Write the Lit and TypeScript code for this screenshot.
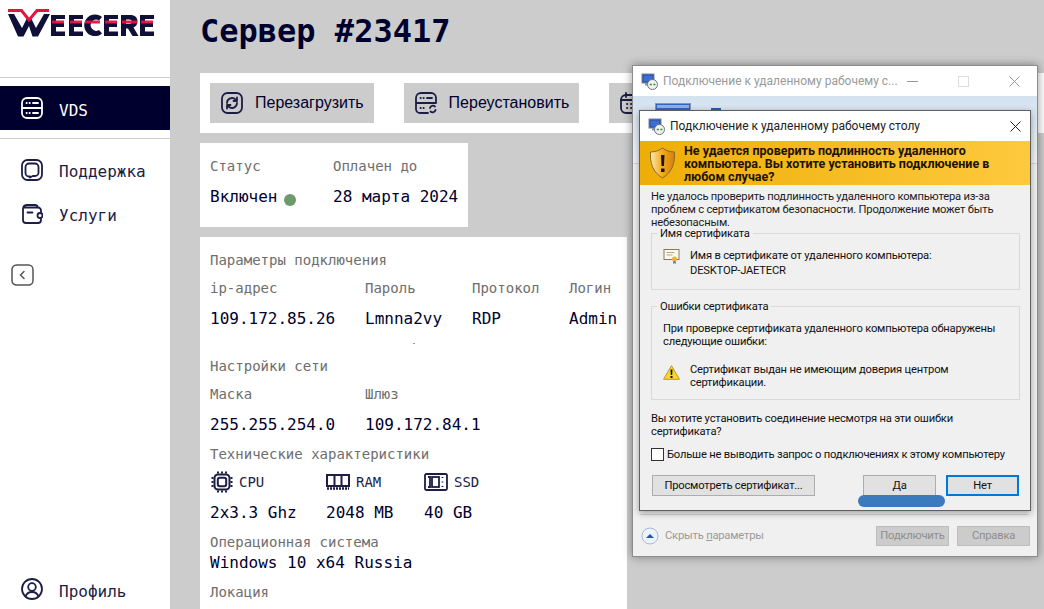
import { LitElement, html, css, svg } from "lit";
import { customElement } from "lit/decorators.js";

const rdpIcon = svg`<rect x="1" y="1" width="12" height="9" fill="#2b4a9c" stroke="#7d8794"/><rect x="2.5" y="2.5" width="9" height="6" fill="#3a6fd8"/><rect x="4" y="10" width="7" height="2.5" fill="#8d97a5"/><circle cx="11.5" cy="11.5" r="5" fill="#f2f2f2" stroke="#6e7378"/><path d="M8.8 11.5h2M12.400 11.5h2" stroke="#2f8f35" stroke-width="1.4"/>`;

@customElement("app-root")
export class AppRoot extends LitElement {
  static styles = css`
    :host { display: block; width: 1044px; height: 609px; overflow: hidden; position: relative; background: #cccccc; font-family: "DejaVu Sans Mono", "Liberation Mono", monospace; color: #00002e; }
    .page { display: flex; height: 609px; }
    .side { width: 170px; flex: none; background: #fff; display: flex; flex-direction: column; }
    .logo { height: 78px; flex: none; padding: 8px 0 0 8px; box-sizing: border-box; border-bottom: 1px solid #ccc; }
    .logo svg { display: block; }
    .nav { display: flex; align-items: center; gap: 16px; padding-left: 21px; height: 44px; flex: none; font-size: 16px; color: #1d1d45; }
    .nav span { padding-top: 4px; }
    .nav svg { flex: none; }
    .nav.on { margin-top: 8px; background: #00002e; color: #fff; }
    .rule { height: 1px; background: #ccc; margin: 8px 0 0; flex: none; }
    .mid { display: flex; flex-direction: column; margin-top: 9px; flex: none; }
    .mid .nav span { padding-top: 2px; }
    .collapse { margin: 28px 0 0 11px; display: block; flex: none; }
    .spacer { flex: 1; }
    .prof { margin-bottom: -2px; }
    .main { flex: 1; min-width: 0; padding: 0 0 0 30px; display: flex; flex-direction: column; }
    .main > * { flex: none; }
    h1 { margin: 0; height: 73px; padding-top: 13px; box-sizing: border-box; font-size: 32px; line-height: 36px; font-weight: 700; color: #00002e; white-space: nowrap; }
    .bar { display: flex; gap: 30px; background: #fff; padding: 10px; height: 60px; box-sizing: border-box; width: 844px; overflow: hidden; }
    .btn { display: flex; align-items: center; gap: 12px; flex: none; height: 40px; padding: 0 10px 0 11px; background: #ccc; font: 16px "Liberation Sans", Arial, sans-serif; color: #00002e; }
    .card { background: #fff; margin-top: 10px; padding: 10px; box-sizing: border-box; }
    .status { width: 268px; height: 84px; padding-top: 9px; display: grid; grid-template-columns: 123px auto; grid-template-rows: 28px 34px; }
    .lab { font-size: 14px; line-height: 28px; color: #6e6e6e; white-space: nowrap; }
    .val { font-size: 16px; line-height: 34px; white-space: nowrap; color: #00002e; }
    .val.status-val { display: flex; align-items: center; gap: 7px; }
    .dot { width: 12px; height: 12px; border-radius: 50%; background: #6c9a6b; margin-top: 5px; }
    .info { width: 427px; height: 380px; padding: 13px 10px 0; overflow: hidden; }
    .sec { font-size: 14px; line-height: 20px; color: #6e6e6e; white-space: nowrap; }
    .grid { display: grid; }
    .conn { grid-template-columns: 155px 107px 97px auto; margin-top: 8px; }
    .conn .lab, .net .lab { line-height: 20px; }
    .conn .val, .net .val { line-height: 20px; margin-top: 11px; }
    .dotmark { height: 27px; box-sizing: border-box; padding: 14px 0 0 203px; }
    .dotmark i { display: block; width: 2px; height: 1px; background: #999; }
    .net { grid-template-columns: 155px auto; margin-top: 8px; }
    .tech-title { margin-top: 9px; }
    .tech { grid-template-columns: 116px 98px auto; margin-top: 6px; }
    .hw { display: flex; align-items: center; gap: 6px; font-size: 14px; height: 24px; color: #1d1d45; white-space: nowrap; }
    .hw .cpu { margin-left: 1px; }
    .tech .val { line-height: 20px; margin-top: 9px; }
    .os { margin-top: 9px; }
    .osv { font-size: 16px; line-height: 20px; padding-top: 1px; white-space: nowrap; }
    .loc { margin-top: 9px; }
    .win { position: absolute; box-sizing: border-box; font-family: Roboto, "Liberation Sans", Arial, sans-serif; font-size: 11.2px; letter-spacing: -0.2px; color: #111; }
    .back { left: 632px; top: 65px; width: 406px; height: 492px; background: #f0f0f0; border: 1px solid #8c8c8c; box-shadow: 0 0 9px rgba(0,0,0,.4); display: flex; flex-direction: column; }
    .tbar { height: 30px; flex: none; display: flex; align-items: center; padding-left: 8px; gap: 5px; font-size: 12px; letter-spacing: 0; color: #9a9a9a; white-space: nowrap; background: #fff; }
    .tbar .name { flex: 1; min-width: 0; }
    .ctl { width: 46px; height: 28px; display: flex; align-items: center; justify-content: center; flex: none; }
    .bhead { height: 68px; background: linear-gradient(#d4e2f0, #eef3f8); flex: none; position: relative; border-bottom: 1px solid #d5d5d5; box-sizing: border-box; }
    .mon { position: absolute; top: 7px; left: 22px; }
    .mon2 { position: absolute; top: 12px; left: 78px; width: 10px; height: 4px; background: #2b5fa8; }
    .bbody { flex: 1; margin: 0 9px 0 7px; border-bottom: 1px solid #d5d5d5; }
    .bfoot { height: 41px; flex: none; display: flex; align-items: center; padding: 0 7px 0 8px; gap: 6px; color: #9a9a9a; }
    .bfoot .sp { flex: 1; }
    .bfoot .b2 { width: 73px; height: 20px; background: #ccc; border: 1px solid #bdbdbd; display: flex; align-items: center; justify-content: center; color: #8e8e8e; box-sizing: border-box; }
    .bfoot .b2 + .b2 { margin-left: 2px; }
    .ul { text-decoration: underline; }
    .front { left: 639px; top: 110px; width: 392px; height: 401px; background: #f0f0f0; border: 1px solid #5f5f5f; box-shadow: 0 2px 7px rgba(0,0,0,.35); display: flex; flex-direction: column; }
    .front > * { flex: none; }
    .ftitle { height: 30px; background: #fff; display: flex; align-items: center; padding-left: 8px; gap: 5px; font-size: 12px; letter-spacing: 0; color: #222; white-space: nowrap; }
    .ftitle .name { flex: 1; }
    .ftitle .x { width: 30px; display: flex; justify-content: center; }
    .warn { height: 44px; background: linear-gradient(90deg, #eeae07, #fdc93e); display: flex; gap: 8px; padding: 0 0 0 9px; align-items: center; }
    .warn b { font-size: 12.5px; letter-spacing: 0; line-height: 13px; font-weight: 700; color: #1b1300; width: 330px; }
    .txt { line-height: 13px; color: #1c1c1c; padding: 5px 0 0 11px; width: 360px; box-sizing: content-box; }
    .fs { margin: 4px 10px 0 11px; border: 1px solid #d9d9d9; position: relative; box-sizing: border-box; }
    .legend { position: absolute; top: -7px; left: 5px; background: #f0f0f0; padding: 0 3px; line-height: 14px; white-space: nowrap; }
    .c1 { height: 57px; display: flex; gap: 10px; padding: 14px 0 0 11px; line-height: 15px; white-space: nowrap; }
    .c1 svg { flex: none; }
    .c2 { height: 94px; padding: 15px 0 0 11px; line-height: 13px; margin-top: 16px; white-space: nowrap; }
    .c2row { display: flex; gap: 10px; margin-top: 15px; }
    .c2row svg { margin-top: 2px; flex: none; }
    .q { padding: 12px 0 0 11px; line-height: 13px; width: 350px; }
    .chk { display: flex; align-items: center; gap: 3px; padding: 10px 0 0 11px; white-space: nowrap; }
    .box { width: 13px; height: 13px; flex: none; border: 1px solid #333; background: #fff; box-sizing: border-box; }
    .dbtns { display: flex; padding: 14px 0 0 12px; position: relative; }
    .db { height: 21px; background: #e1e1e1; border: 1px solid #adadad; box-sizing: border-box; display: flex; align-items: center; justify-content: center; }
    .db.a { width: 163px; }
    .db.y { width: 73px; margin-left: 48px; }
    .db.n { width: 73px; margin-left: 10px; border: 2px solid #0078d7; }
    .pill { position: absolute; left: 218px; top: 34px; width: 87px; height: 12px; border-radius: 6px; background: #3a7abd; }
  `;

  icon(k: string, c = "#1d1d45") {
    const a = `fill:none;stroke:${c};stroke-width:1.8;stroke-linecap:round;stroke-linejoin:round`;
    const I = (b: unknown) => html`<svg width="22" height="22" viewBox="0 0 22 22" style=${a}>${b}</svg>`;
    if (k === "server") return I(svg`<rect x="1" y="1" width="20" height="20" rx="5"/><path d="M1 11h20M5.500 6h.3M8.500 6h.3M12 6h5M5.500 16h.3M8.500 16h.3M12 16h5"/>`);
    if (k === "chat") return I(svg`<rect x="1" y="1" width="20" height="20" rx="5.500"/><path d="M9 17.500H8a3.500 3.500 0 0 1-3.500-3.500V8A3.500 3.500 0 0 1 8 4.500h6A3.500 3.500 0 0 1 17.500 8v5.500A3.500 3.500 0 0 1 14 17h-2.200L9 18.500z"/>`);
    if (k === "wallet") return I(svg`<path d="M20 9V7.500a3 3 0 0 0-3-3H5.500a3.500 3.500 0 0 1-3-1M2 5v12a3 3 0 0 0 3 3h12a3 3 0 0 0 3-3v-1.500M2.500 5A3.500 3.500 0 0 1 6 2h8.500a3 3 0 0 1 2.500 2.500"/><path d="M6.500 9.500h5"/><circle cx="19" cy="12.500" r="2.500"/>`);
    if (k === "refresh") return I(svg`<rect x="1" y="1" width="20" height="20" rx="5.500"/><path d="M6 11a5 5 0 0 1 8.500-3.500L16 9M16 11a5 5 0 0 1-8.500 3.500L6 13M16 5.500V9h-3.500M6 16.500V13h3.500"/>`);
    if (k === "reinstall") return I(svg`<path d="M21 11V6a5 5 0 0 0-5-5H6a5 5 0 0 0-5 5v11a4 4 0 0 0 4 4h8M1 11h20M5.500 6h.3M8.500 6h.3M12 6h5M5.500 16h.3M8.500 16h.3"/><path d="M15 16a3 3 0 0 1 5-1.500M20.500 18a3 3 0 0 1-5 1.500" stroke-width="1.800"/>`);
    if (k === "cal") return I(svg`<rect x="1" y="3" width="20" height="18" rx="5"/><path d="M6 1v4M16 1v4M1 8h20M7 12h.3M11 12h.3M15 12h.3M7 16h.3M11 16h.3"/>`);
    return I(svg`<circle cx="11" cy="11" r="10"/><circle cx="11" cy="9" r="3.800"/><path d="M4.500 18.500c1-3 3.500-4.500 6.500-4.500s5.500 1.500 6.500 4.500"/>`);
  }

  render() {
    return html`
      <div class="page">
        <aside class="side">
          <div class="logo">
            <svg width="150" height="32" viewBox="0 0 150 32">
              <path d="M0 6h6L14 20l5-10h4L28 20 36 6h6L30 28.500h-5.500L21 18l-5.500 10.500H10z" fill="#0f0f38"/>
              <path d="M0 2.500h13.500L21 12l8-9.500h12" fill="none" stroke="#e8123c" stroke-width="3"/>
              <g transform="translate(-1 0)">
              <path d="M44 7h14v4H49v4h8v4h-8v4.500h9V28H44zM62 7h14v4H67v4h8v4h-8v4.500h9V28H62zM88 6.500a10.800 10.800 0 1 0 0 21.600c3 0 5.500-1 7-2.600l-3-3.500a5.500 5.500 0 1 1 0-9.500l3-3.500c-1.500-1.500-4-2.500-7-2.500zM97 7h14v4h-9v4h8v4h-8v4.500h9V28H97zM114 7h9c5 0 7.500 2.500 7.500 6.500 0 3-1.500 5-4 6l5 8.500h-6l-4.500-7.500h-2V28h-5zM119 11.500v4.500h3.500c1.500 0 2.500-1 2.500-2.200s-1-2.300-2.500-2.300zM133 7h14v4h-9v4h8v4h-8v4.500h9V28h-14z" fill="#0f0f38"/>
              <path d="M45 14h12M63 14h12M78 14h15M98 14h12M115 14h15M134 14h12" stroke="#e8123c" stroke-width="3" opacity=".95"/>
              </g>
            </svg>
          </div>
          <div class="nav on">${this.icon("server", "#fff")}<span>VDS</span></div>
          <div class="rule"></div>
          <div class="mid">
            <div class="nav">${this.icon("chat")}<span>Поддержка</span></div>
            <div class="nav">${this.icon("wallet")}<span>Услуги</span></div>
          </div>
          <svg class="collapse" width="23" height="22" viewBox="0 0 23 22" fill="none" stroke="#555" stroke-width="1.500" stroke-linecap="round" stroke-linejoin="round"><rect x="1" y="1" width="21" height="20" rx="4.500"/><path d="M13 7.500L9.500 11l3.500 3.500"/></svg>
          <div class="spacer"></div>
          <div class="nav prof">${this.icon("user")}<span>Профиль</span></div>
        </aside>
        <main class="main">
          <h1>Сервер #23417</h1>
          <div class="bar">
            <div class="btn">${this.icon("refresh")}<span>Перезагрузить</span></div>
            <div class="btn">${this.icon("reinstall")}<span>Переустановить</span></div>
            <div class="btn">${this.icon("cal")}<span>Продлить</span></div>
          </div>
          <section class="card status">
            <div class="lab">Статус</div><div class="lab">Оплачен до</div>
            <div class="val status-val">Включен <span class="dot"></span></div><div class="val">28 марта 2024</div>
          </section>
          <section class="card info">
            <div class="sec">Параметры подключения</div>
            <div class="grid conn">
              <div class="lab">ip-адрес</div><div class="lab">Пароль</div><div class="lab">Протокол</div><div class="lab">Логин</div>
              <div class="val">109.172.85.26</div><div class="val">Lmnna2vy</div><div class="val">RDP</div><div class="val">Admin</div>
            </div>
            <div class="dotmark"><i></i></div>
            <div class="sec">Настройки сети</div>
            <div class="grid net">
              <div class="lab">Маска</div><div class="lab">Шлюз</div>
              <div class="val">255.255.254.0</div><div class="val">109.172.84.1</div>
            </div>
            <div class="sec tech-title">Технические характеристики</div>
            <div class="grid tech">
              <div class="hw"><svg class="cpu" width="22" height="22" viewBox="0 0 22 22" fill="none" stroke="#1d1d45" stroke-width="2"><rect x="3.500" y="3.500" width="15" height="15" rx="3.500"/><rect x="6.800" y="6.800" width="8.400" height="8.400" rx="2"/><path d="M7 .5v2M11 .5v2M15 .5v2M7 19.500v2M11 19.500v2M15 19.500v2M.5 7h2M.5 11h2M.5 15h2M19.500 7h2M19.500 11h2M19.500 15h2"/></svg>CPU</div>
              <div class="hw"><svg width="24" height="16" viewBox="0 0 24 16" fill="none" stroke="#1d1d45" stroke-width="2"><rect x="1" y="1" width="22" height="11"/><path d="M8.500 1v11M15.500 1v11" /><path d="M1 14.500h22" stroke-width="2.400" stroke-dasharray="2 1"/></svg>RAM</div>
              <div class="hw"><svg width="24" height="18" viewBox="0 0 24 18" fill="none" stroke="#1d1d45" stroke-width="1.800"><rect x="1" y="1" width="22" height="16" rx="1.500"/><rect x="8" y="4" width="7" height="10"/><path d="M4 4h2v10H4M18.500 4v1M18.500 8.500v1M18.500 13v1" /></svg>SSD</div>
              <div class="val">2x3.3 Ghz</div><div class="val">2048 MB</div><div class="val">40 GB</div>
            </div>
            <div class="sec os">Операционная система</div>
            <div class="osv">Windows 10 x64 Russia</div>
            <div class="sec loc">Локация</div>
          </section>
        </main>
      </div>

      <div class="win back">
        <div class="tbar"><svg width="17" height="17" viewBox="0 0 17 17">${rdpIcon}</svg><span class="name">Подключение к удаленному рабочему с...</span>
          <div class="ctl"><svg width="11" height="11" stroke="#999"><path d="M0 5.500h11"/></svg></div>
          <div class="ctl"><svg width="11" height="11" fill="none" stroke="#ddd"><rect x=".5" y=".5" width="10" height="10"/></svg></div>
          <div class="ctl"><svg width="11" height="11" stroke="#999"><path d="M.5.5l10 10M10.500.5l-10 10"/></svg></div>
        </div>
        <div class="bhead">
          <svg class="mon" width="36" height="10" viewBox="0 0 36 10"><rect x=".5" y=".5" width="35" height="12" fill="#3566c4" stroke="#8a95a5"/><rect x="2" y="2" width="32" height="3" fill="#8fb0e8"/></svg>
          <div class="mon2"></div>
        </div>
        <div class="bbody"></div>
        <div class="bfoot">
          <svg width="18" height="18" viewBox="0 0 18 18"><circle cx="9" cy="9" r="8" fill="#eef2fa" stroke="#a8b8d8"/><path d="M5 11l4-4 4 4z" fill="#1e5aa8"/></svg>
          <span>Скрыть <span class="ul">п</span>араметры</span><span class="sp"></span>
          <div class="b2">Подключить</div><div class="b2">Справка</div>
        </div>
      </div>

      <div class="win front">
        <div class="ftitle"><svg width="17" height="17" viewBox="0 0 17 17">${rdpIcon}</svg><span class="name">Подключение к удаленному рабочему столу</span>
          <div class="x"><svg width="11" height="11" stroke="#222"><path d="M.5.5l10 10M10.500.5l-10 10"/></svg></div>
        </div>
        <div class="warn">
          <svg width="27" height="32" viewBox="0 0 27 32"><defs><linearGradient id="sh" x1="0" x2="1"><stop offset="0" stop-color="#fde9a8"/><stop offset=".5" stop-color="#f3a81c"/><stop offset="1" stop-color="#d47f0c"/></linearGradient></defs><path d="M13.500 1c3 2.500 7 3.800 12 4 .5 11-2 20-12 26C3.500 25 1 16 1.500 5c5-.2 9-1.500 12-4z" fill="url(#sh)" stroke="#8a6a2a"/><path d="M12 8h3.500l-.5 11h-2.500zM12 21.500h3.500V25H12z" fill="#1c1406"/></svg>
          <b>Не удается проверить подлинность удаленного компьютера. Вы хотите установить подключение в любом случае?</b>
        </div>
        <div class="txt">Не удалось проверить подлинность удаленного компьютера из-за проблем с сертификатом безопасности. Продолжение может быть небезопасным.</div>
        <div class="fs c1"><span class="legend">Имя сертификата</span>
          <svg width="17" height="17" viewBox="0 0 17 17"><rect x="1" y="1.500" width="15" height="10" fill="#fbf8ee" stroke="#8a7a5a"/><path d="M3.500 4.500h8M3.500 7h6" stroke="#b8a888"/><circle cx="11.500" cy="11" r="2.500" fill="#f0b030"/><path d="M10.500 13l-.5 3 1.500-1 1.500 1-.5-3" fill="#3a78c8"/></svg>
          <div>Имя в сертификате от удаленного компьютера:<br>DESKTOP-JAETECR</div>
        </div>
        <div class="fs c2"><span class="legend">Ошибки сертификата</span>
          При проверке сертификата удаленного компьютера обнаружены<br>следующие ошибки:
          <div class="c2row"><svg width="17" height="15" viewBox="0 0 17 15"><path d="M8.500.7l8 13.600H.5z" fill="#f9d52e" stroke="#b89a24"/><path d="M7.500 4.500h2l-.3 5.500H7.800zM7.500 11h2v1.900h-2z" fill="#111"/></svg>
            <div>Сертификат выдан не имеющим доверия центром<br>сертификации.</div></div>
        </div>
        <div class="q">Вы хотите установить соединение несмотря на эти ошибки сертификата?</div>
        <div class="chk"><span class="box"></span>Больше не выводить запрос о подключениях к этому компьютеру</div>
        <div class="dbtns">
          <div class="db a">Просмотреть сертификат...</div><div class="db y">Да</div><div class="db n">Нет</div>
          <div class="pill"></div>
        </div>
      </div>
    `;
  }
}
